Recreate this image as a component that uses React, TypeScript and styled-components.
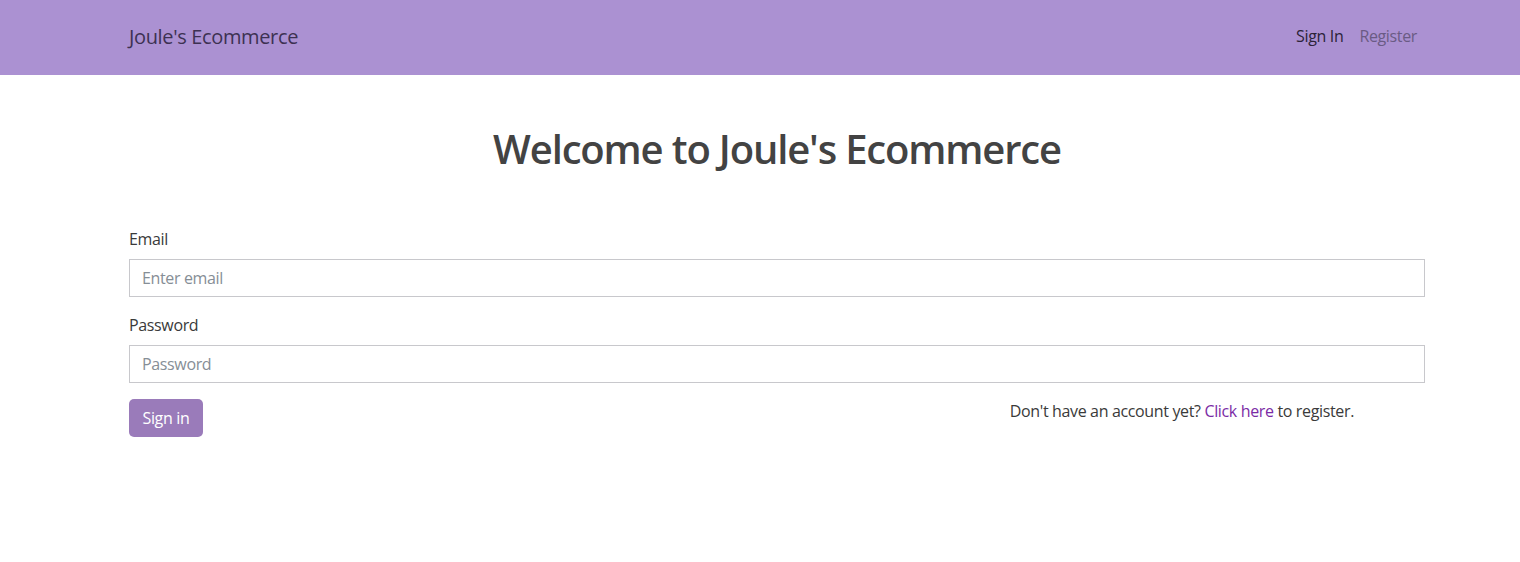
import React from "react";
import styled, { createGlobalStyle } from "styled-components";

const GlobalStyle = createGlobalStyle`
  *, *::before, *::after { box-sizing: border-box; }
  body {
    margin: 0;
    font-family: "Open Sans", "Noto Sans", sans-serif;
    font-size: 16px;
    line-height: 1.5;
    letter-spacing: -0.022em;
    color: #333333;
    background: #ffffff;
  }
`;

const Navbar = styled.nav`
  background: #ab91d2;
  height: 75px;
  display: flex;
  align-items: center;
`;

const Container = styled.div`
  width: 1296px;
  margin-left: 129px;
`;

const NavInner = styled(Container)`
  display: flex;
  align-items: center;
  justify-content: space-between;
`;

const Brand = styled.a`
  font-size: 20px;
  line-height: 30px;
  color: #3d3152;
  text-decoration: none;
  margin-top: -2px;
`;

const NavLinks = styled.div`
  display: flex;
  align-items: center;
`;

const NavLink = styled.a<{ $active?: boolean }>`
  padding: 8px;
  font-size: 16px;
  color: ${(p) => (p.$active ? "#2b2338" : "#6a5b84")};
  text-decoration: none;
  margin-top: -3px;
`;

const Main = styled(Container)`
  display: flex;
  flex-direction: column;
`;

const Title = styled.h1`
  margin: 50px 0 0;
  text-align: center;
  font-size: 40px;
  font-weight: 600;
  line-height: 1.2;
  letter-spacing: -0.029em;
  color: #434343;
`;

const Form = styled.form`
  margin-top: 54px;
  display: flex;
  flex-direction: column;
`;

const Group = styled.div`
  display: flex;
  flex-direction: column;
  margin-bottom: 16px;
`;

const Label = styled.label`
  font-size: 16px;
  line-height: 24px;
  color: #3a3a3a;
  margin-bottom: 8px;
`;

const Input = styled.input`
  height: 38px;
  border: 1px solid #c8c8cc;
  border-radius: 0;
  padding: 6px 12px;
  font-family: inherit;
  font-size: 16px;
  letter-spacing: inherit;
  color: #333;
  outline: none;
  &::placeholder { color: #868e96; }
`;

const Actions = styled.div`
  display: flex;
  align-items: flex-start;
  justify-content: space-between;
`;

const Button = styled.button`
  height: 38px;
  padding: 0 13.5px;
  border: none;
  border-radius: 5px;
  background: #9a7bba;
  color: #ffffff;
  font-family: inherit;
  font-size: 16px;
  letter-spacing: inherit;
  cursor: pointer;
`;

const Note = styled.p`
  margin: 0 71px 0 0;
  font-size: 16px;
  line-height: 24px;
  color: #3a3a3a;
`;

const Link = styled.a`
  color: #7b2ba5;
  text-decoration: none;
`;

export default function App() {
  return (
    <>
      <GlobalStyle />
      <Navbar>
        <NavInner>
          <Brand href="#">Joule's Ecommerce</Brand>
          <NavLinks>
            <NavLink href="#" $active>Sign In</NavLink>
            <NavLink href="#">Register</NavLink>
          </NavLinks>
        </NavInner>
      </Navbar>
      <Main>
        <Title>Welcome to Joule's Ecommerce</Title>
        <Form onSubmit={(e) => e.preventDefault()}>
          <Group>
            <Label htmlFor="email">Email</Label>
            <Input id="email" type="email" placeholder="Enter email" />
          </Group>
          <Group>
            <Label htmlFor="password">Password</Label>
            <Input id="password" type="password" placeholder="Password" />
          </Group>
          <Actions>
            <Button type="submit">Sign in</Button>
            <Note>
              Don't have an account yet? <Link href="#">Click here</Link> to register.
            </Note>
          </Actions>
        </Form>
      </Main>
    </>
  );
}
